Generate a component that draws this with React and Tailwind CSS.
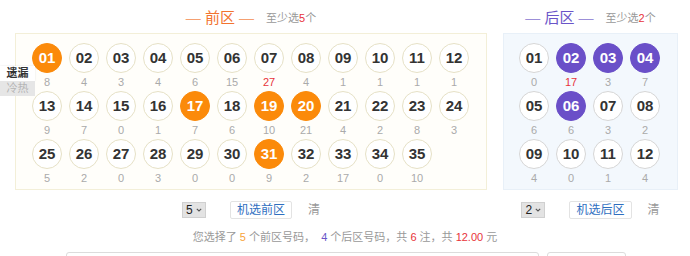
const FRONT_PICKED = [1, 17, 19, 20, 31];
const BACK_PICKED = [2, 3, 4, 6];
// numbers whose miss count is shown in red
const FRONT_HOT = [7];
const BACK_HOT = [2];

const frontMiss = [
  [8, 4, 3, 4, 6, 15, 27, 4, 1, 1, 1, 1],
  [9, 7, 0, 1, 7, 6, 10, 21, 4, 2, 8, 3],
  [5, 2, 0, 3, 0, 0, 9, 2, 17, 0, 10],
];
const backMiss = [
  [0, 17, 3, 7],
  [6, 6, 3, 2],
  [4, 0, 1, 4],
];

const pad = (n) => String(n).padStart(2, "0");

function Ball({ num, picked, back, miss, hot }) {
  let ball = "bg-white text-[#333] border ";
  if (picked) ball = back ? "bg-[#6a4fc8] text-white border border-[#6a4fc8] " : "bg-[#fb8a0a] text-white border border-[#fb8a0a] ";
  else ball += back ? "border-[#d6d6d6]" : "border-[#e6e1c6]";
  return (
    <div className="flex w-[30px] flex-col items-center">
      <div className={ball + " flex h-[30px] w-[30px] items-center justify-center rounded-full text-[15px] font-bold"}>
        {pad(num)}
      </div>
      <div className={(hot ? "text-[#e8333a]" : "text-[#aaa]") + " h-[18px] text-[11px] leading-[18px]"}>
        {miss}
      </div>
    </div>
  );
}

function Controls({ value, label }) {
  return (
    <div className="flex items-center justify-center gap-[24px]">
      <div className="flex h-[16px] w-[24px] shrink-0 items-center justify-between border border-[#d0d0d0] bg-[#e3e3e3] pl-[3px] pr-[3px] text-[12px] leading-none text-[#222]">
        <span>{value}</span>
        <svg width="6" height="4" viewBox="0 0 6 4" className="shrink-0">
          <path d="M0.8 0.8l2.2 2.2 2.2-2.2" stroke="#555" strokeWidth="1.1" fill="none" />
        </svg>
      </div>
      <div className="flex items-center gap-[16px]">
        <div className="flex h-[18px] items-center rounded-[2px] border border-[#e3e3e3] bg-white px-[6px] text-[12px] text-[#2f6fbf]">
          {label}
        </div>
        <span className="text-[12px] text-[#999]">清</span>
      </div>
    </div>
  );
}

export default function App() {
  let n = 0;
  return (
    <div className="relative h-[256px] w-[690px] overflow-hidden bg-white font-['Liberation_Sans','Noto_Sans_CJK_SC',sans-serif]">
      <div className="flex gap-[16px] pl-[15px]">
        {/* front zone */}
        <div className="flex w-[472px] flex-col">
          <div className="flex h-[33px] items-center justify-center gap-[12px] pt-[3px]">
            <span className="text-[15px] text-[#f2732f]">
              <span className="text-[#f5a071]">— </span>前区<span className="text-[#f5a071]"> —</span>
            </span>
            <span className="text-[11px] text-[#999]">
              至少选<span className="text-[#e8333a]">5</span>个
            </span>
          </div>
          <div className="flex flex-col border border-[#f3efd8] bg-[#fffefa] pl-[16px] pt-[9px] pb-[2px]">
            {frontMiss.map((row, r) => (
              <div key={r} className="flex gap-[7px]">
                {row.map((m) => {
                  n += 1;
                  return <Ball key={n} num={n} miss={m} hot={FRONT_HOT.includes(n)} picked={FRONT_PICKED.includes(n)} />;
                })}
              </div>
            ))}
          </div>
          <div className="mt-[11px]">
            <Controls value="5" label="机选前区" />
          </div>
        </div>

        {/* back zone */}
        <div className="flex w-[175px] flex-col">
          <div className="flex h-[33px] items-center justify-center gap-[12px] pt-[3px]">
            <span className="text-[15px] text-[#6a55c8]">
              <span className="text-[#9c8fd8]">— </span>后区<span className="text-[#9c8fd8]"> —</span>
            </span>
            <span className="text-[11px] text-[#999]">
              至少选<span className="text-[#e8333a]">2</span>个
            </span>
          </div>
          <div className="flex flex-col border border-[#e8f0f8] bg-[#f3f8fd] pl-[15px] pt-[9px] pb-[2px]">
            {backMiss.map((row, r) => (
              <div key={r} className="flex gap-[7px]">
                {row.map((m, i) => {
                  const num = r * 4 + i + 1;
                  return <Ball key={num} num={num} miss={m} back hot={BACK_HOT.includes(num)} picked={BACK_PICKED.includes(num)} />;
                })}
              </div>
            ))}
          </div>
          <div className="mt-[11px]">
            <Controls value="2" label="机选后区" />
          </div>
        </div>
      </div>

      <div className="mt-[10px] text-center text-[11px] text-[#999]">
        您选择了 <span className="text-[#f7a33a]">5</span> 个前区号码，&nbsp; <span className="text-[#6a55c8]">4</span> 个后区号码，共{" "}
        <span className="text-[#e8333a]">6</span> 注，共 <span className="text-[#e8333a]">12.00</span> 元
      </div>

      <div className="mt-[6px] flex justify-center gap-[8px] pl-[2px]">
        <div className="h-[20px] w-[473px] rounded-[3px] border border-[#dcdcdc]" />
        <div className="h-[20px] w-[79px] rounded-[3px] border border-[#dcdcdc]" />
      </div>

      {/* miss / hot-cold tab */}
      <div className="absolute left-0 top-[66px] flex w-[35px] flex-col text-[11px]">
        <div className="flex h-[15px] items-center justify-center bg-white font-bold text-[#333] shadow-[0_0_2px_rgba(0,0,0,0.1)]">遗漏</div>
        <div className="flex h-[15px] items-center justify-center bg-[#e6e6e6] text-[#b5b5b5]">冷热</div>
      </div>
    </div>
  );
}
